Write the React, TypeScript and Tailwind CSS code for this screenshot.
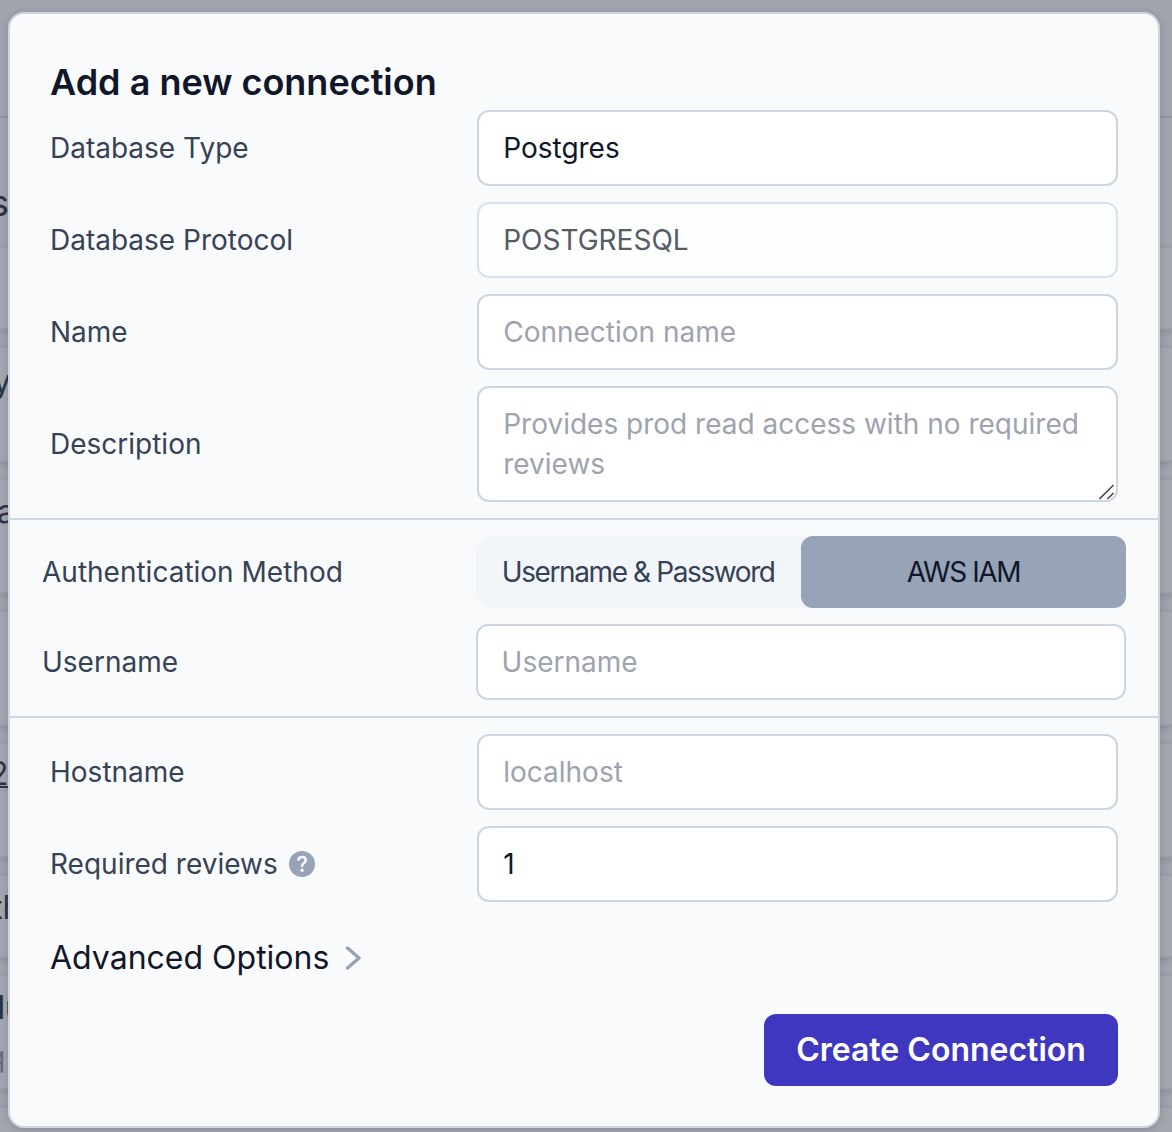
import type { ReactNode } from "react";

const inputBase =
  "block w-full rounded-[12px] border-2 border-[#cdd5e1] bg-white px-6 text-[28px] leading-[40px] text-[#111729] placeholder:text-[#9ea3af] outline-none";

function Row({ label, children }: { label: ReactNode; children: ReactNode }) {
  return (
    <div className="flex items-center">
      <div className="flex w-2/5 shrink-0 items-center text-[28px] leading-[40px] text-[#364255]">{label}</div>
      <div className="w-3/5">{children}</div>
    </div>
  );
}

function TextField({ placeholder, value, disabled }: { placeholder?: string; value?: string; disabled?: boolean }) {
  return (
    <input
      className={`${inputBase} h-[76px] disabled:border-[#dbe1e9] disabled:bg-[#fdfefe] disabled:text-[#575b67]`}
      placeholder={placeholder}
      defaultValue={value}
      disabled={disabled}
    />
  );
}

function BackCard({ height, children }: { height: string; children?: ReactNode }) {
  return (
    <div
      className={`${height} mb-4 shrink-0 border-y-2 border-[#999ea8] bg-[#a3a7ae] shadow-[0_3px_7px_rgba(60,65,80,0.2)]`}
    >
      {children}
    </div>
  );
}

function Backdrop() {
  return (
    <div className="absolute inset-0 flex flex-col overflow-hidden whitespace-nowrap text-[32px] leading-[40px] text-[#2c3345]">
      <div className="h-[118px] shrink-0 border-b-2 border-[#8f949e]" />
      <div className="h-[128px] shrink-0 pt-[65px]">
        <div className="-ml-[10px] text-[36px]">s</div>
      </div>
      <BackCard height="h-[84px]" />
      <BackCard height="h-[116px]">
        <div className="-ml-[7px] pt-[14px]">y</div>
      </BackCard>
      <BackCard height="h-[116px]">
        <div className="-ml-[3px] pt-[12px]">a</div>
      </BackCard>
      <BackCard height="h-[116px]" />
      <BackCard height="h-[116px]">
        <div className="-ml-[11px] pt-[10px] underline decoration-2 underline-offset-1">2</div>
      </BackCard>
      <BackCard height="h-[84px]">
        <div className="-ml-[8px] pt-[12px]">th</div>
      </BackCard>
      <BackCard height="h-[116px]">
        <div className="-ml-[3px] pt-[12px] font-medium">lu</div>
        <div className="-ml-[12px] pt-[9px] text-[28px] text-[#656c7a]">q</div>
      </BackCard>
      <BackCard height="h-[116px]" />
    </div>
  );
}

export default function App() {
  return (
    <div className="relative h-[1132px] w-[1172px] overflow-hidden bg-[#a1a5ad] font-['Inter',sans-serif]">
      <Backdrop />
      <div className="relative mx-2 h-full w-[1152px] pt-3">
        <div className="flex h-[1116px] flex-col rounded-[16px] border-2 border-[#cdd5e1] bg-[#f9fafc] shadow-[0_2px_8px_rgba(50,55,70,0.22)]">
          <div className="flex flex-col gap-4 px-10 pt-12 pb-4">
            <h1 className="-mb-2 text-[36px] leading-[40px] font-semibold text-[#111729]">Add a new connection</h1>
            <Row label="Database Type">
              <TextField value="Postgres" />
            </Row>
            <Row label="Database Protocol">
              <TextField value="POSTGRESQL" disabled />
            </Row>
            <Row label="Name">
              <TextField placeholder="Connection name" />
            </Row>
            <Row label="Description">
              <div className="relative">
                <textarea
                  className={`${inputBase} h-[116px] resize-none overflow-hidden py-4`}
                  placeholder="Provides prod read access with no required reviews"
                />
                <svg className="absolute right-[3px] bottom-[2px] size-4" viewBox="0 0 16 16" fill="none">
                  <path d="M.5 15 14.5 1M8.5 15l6-6" stroke="#fff" strokeWidth="4" />
                  <path d="M.5 15 14.5 1M8.5 15l6-6" stroke="#4d4d4d" strokeWidth="1.7" />
                </svg>
              </div>
            </Row>
          </div>

          <div className="flex flex-col gap-4 border-y-2 border-[#cdd5e1] px-8 py-4">
            <Row label="Authentication Method">
              <div className="grid h-[72px] grid-cols-2 rounded-[16px] bg-[#f2f5f9] text-[28px] tracking-[-1.4px]">
                <button className="rounded-[12px] whitespace-nowrap text-[#364255]">Username &amp; Password</button>
                <button className="rounded-[12px] bg-[#97a3b6] text-[#111729]">AWS IAM</button>
              </div>
            </Row>
            <Row label="Username">
              <TextField placeholder="Username" />
            </Row>
          </div>

          <div className="flex flex-col gap-4 px-10 pt-4">
            <Row label="Hostname">
              <TextField placeholder="localhost" />
            </Row>
            <Row
              label={
                <>
                  Required reviews
                  <svg className="ml-[11px] size-[26px]" viewBox="0 0 26 26" fill="none">
                    <circle cx="13" cy="13" r="13" fill="#97a3b6" />
                    <path
                      d="M9.4 8.6c.5-1.8 2-2.5 3.8-2.5 2.1 0 3.6 1.2 3.6 3.1 0 2.9-3.7 2.9-3.7 5.7"
                      stroke="#f9fafc"
                      strokeWidth="2.5"
                      strokeLinecap="round"
                    />
                    <circle cx="13.1" cy="19.3" r="1.7" fill="#f9fafc" />
                  </svg>
                </>
              }
            >
              <TextField value="1" />
            </Row>
          </div>

          <button className="mt-9 ml-10 flex h-10 items-center self-start text-[32px] leading-[40px] text-[#111729]">
            Advanced Options
            <svg className="ml-4 h-6 w-4" viewBox="0 0 16 24" fill="none">
              <path d="M2.5 2l11.5 10-11.5 10" stroke="#97a3b6" strokeWidth="3.4" strokeLinecap="round" strokeLinejoin="round" />
            </svg>
          </button>
          <button className="mt-9 mr-10 flex h-[72px] w-[354px] items-center justify-center self-end rounded-[12px] bg-[#4037c1] text-[32px] font-semibold text-white">
            Create Connection
          </button>
        </div>
      </div>
    </div>
  );
}
